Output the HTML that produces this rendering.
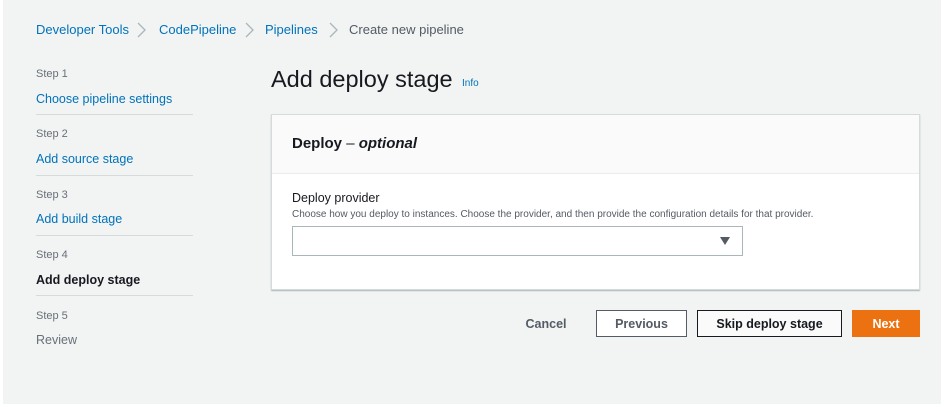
<!DOCTYPE html><html><head><style>
body{margin:0;width:941px;height:404px;background:#f2f3f3;font-family:"Liberation Sans",sans-serif;position:relative;overflow:hidden}
.a{position:absolute;white-space:nowrap}
.l{color:#0073bb}
.s{font-size:11px;color:#687078}
.d{position:absolute;left:36px;width:157px;height:1px;background:#d5dbdb}
.b{position:absolute;top:310px;height:27px;box-sizing:border-box;font-size:12.5px;font-weight:bold;display:flex;align-items:center;justify-content:center}
.c{position:absolute;top:22px}
</style></head><body>
<div style="position:absolute;left:0;top:0;width:3px;height:404px;background:#fff"></div>
<div class="a l" style="left:36px;top:22px;font-size:13px">Developer Tools</div>
<svg class="c" style="left:137px" width="10" height="16"><path d="M1 1 L8 8 L1 15" fill="none" stroke="#aab7b8" stroke-width="1.3"/></svg>
<div class="a l" style="left:159px;top:22px;font-size:13px">CodePipeline</div>
<svg class="c" style="left:245px" width="10" height="16"><path d="M1 1 L8 8 L1 15" fill="none" stroke="#aab7b8" stroke-width="1.3"/></svg>
<div class="a l" style="left:265px;top:22px;font-size:13px">Pipelines</div>
<svg class="c" style="left:329px" width="10" height="16"><path d="M1 1 L8 8 L1 15" fill="none" stroke="#aab7b8" stroke-width="1.3"/></svg>
<div class="a" style="left:349px;top:22px;font-size:13px;color:#545b64">Create new pipeline</div>
<div class="a s" style="left:36px;top:68px">Step 1</div>
<div class="a l" style="left:36px;top:92px;font-size:12.5px">Choose pipeline settings</div>
<div class="d" style="top:114px"></div>
<div class="a s" style="left:36px;top:128px">Step 2</div>
<div class="a l" style="left:36px;top:152px;font-size:12.5px">Add source stage</div>
<div class="d" style="top:175px"></div>
<div class="a s" style="left:36px;top:189px">Step 3</div>
<div class="a l" style="left:36px;top:212px;font-size:12.5px">Add build stage</div>
<div class="d" style="top:235px"></div>
<div class="a s" style="left:36px;top:249px">Step 4</div>
<div class="a" style="left:36px;top:273px;font-size:12.5px;font-weight:bold;color:#16191f">Add deploy stage</div>
<div class="d" style="top:295px"></div>
<div class="a s" style="left:36px;top:310px">Step 5</div>
<div class="a" style="left:36px;top:333px;font-size:12.5px;color:#687078">Review</div>
<div class="a" style="left:271px;top:66px;font-size:23.5px;color:#16191f">Add deploy stage</div>
<div class="a l" style="left:462px;top:78px;font-size:10px">Info</div>
<div style="position:absolute;left:271px;top:114px;width:649px;height:176px;background:#fff;border:1px solid #d5dbdb;box-sizing:border-box;box-shadow:0 1px 1px #aab7b8">
<div style="height:58px;background:#fafafa;border-bottom:1px solid #eaeded"></div>
<div class="a" style="left:20px;top:20px;font-size:15px;font-weight:bold;color:#16191f">Deploy <span style="font-weight:normal">–</span> <i>optional</i></div>
<div class="a" style="left:20px;top:76px;font-size:12.5px;color:#16191f">Deploy provider</div>
<div class="a" style="left:20px;top:94px;font-size:10px;color:#545b64">Choose how you deploy to instances. Choose the provider, and then provide the configuration details for that provider.</div>
<div style="position:absolute;left:20px;top:111px;width:451px;height:30px;border:1px solid #aab7b8;box-sizing:border-box;background:#fff"><div class="a" style="right:12px;top:10px;width:0;height:0;border-left:5px solid transparent;border-right:5px solid transparent;border-top:8px solid #545b64"></div></div>
</div>
<div class="b" style="left:520px;width:52px;color:#545b64">Cancel</div>
<div class="b" style="left:596px;width:91px;border:1px solid #545b64;background:#fff;color:#545b64">Previous</div>
<div class="b" style="left:697px;width:145px;border:1px solid #16191f;background:#fafafa;color:#16191f">Skip deploy stage</div>
<div class="b" style="left:852px;width:68px;background:#ec7211;color:#fff">Next</div>
</body></html>
